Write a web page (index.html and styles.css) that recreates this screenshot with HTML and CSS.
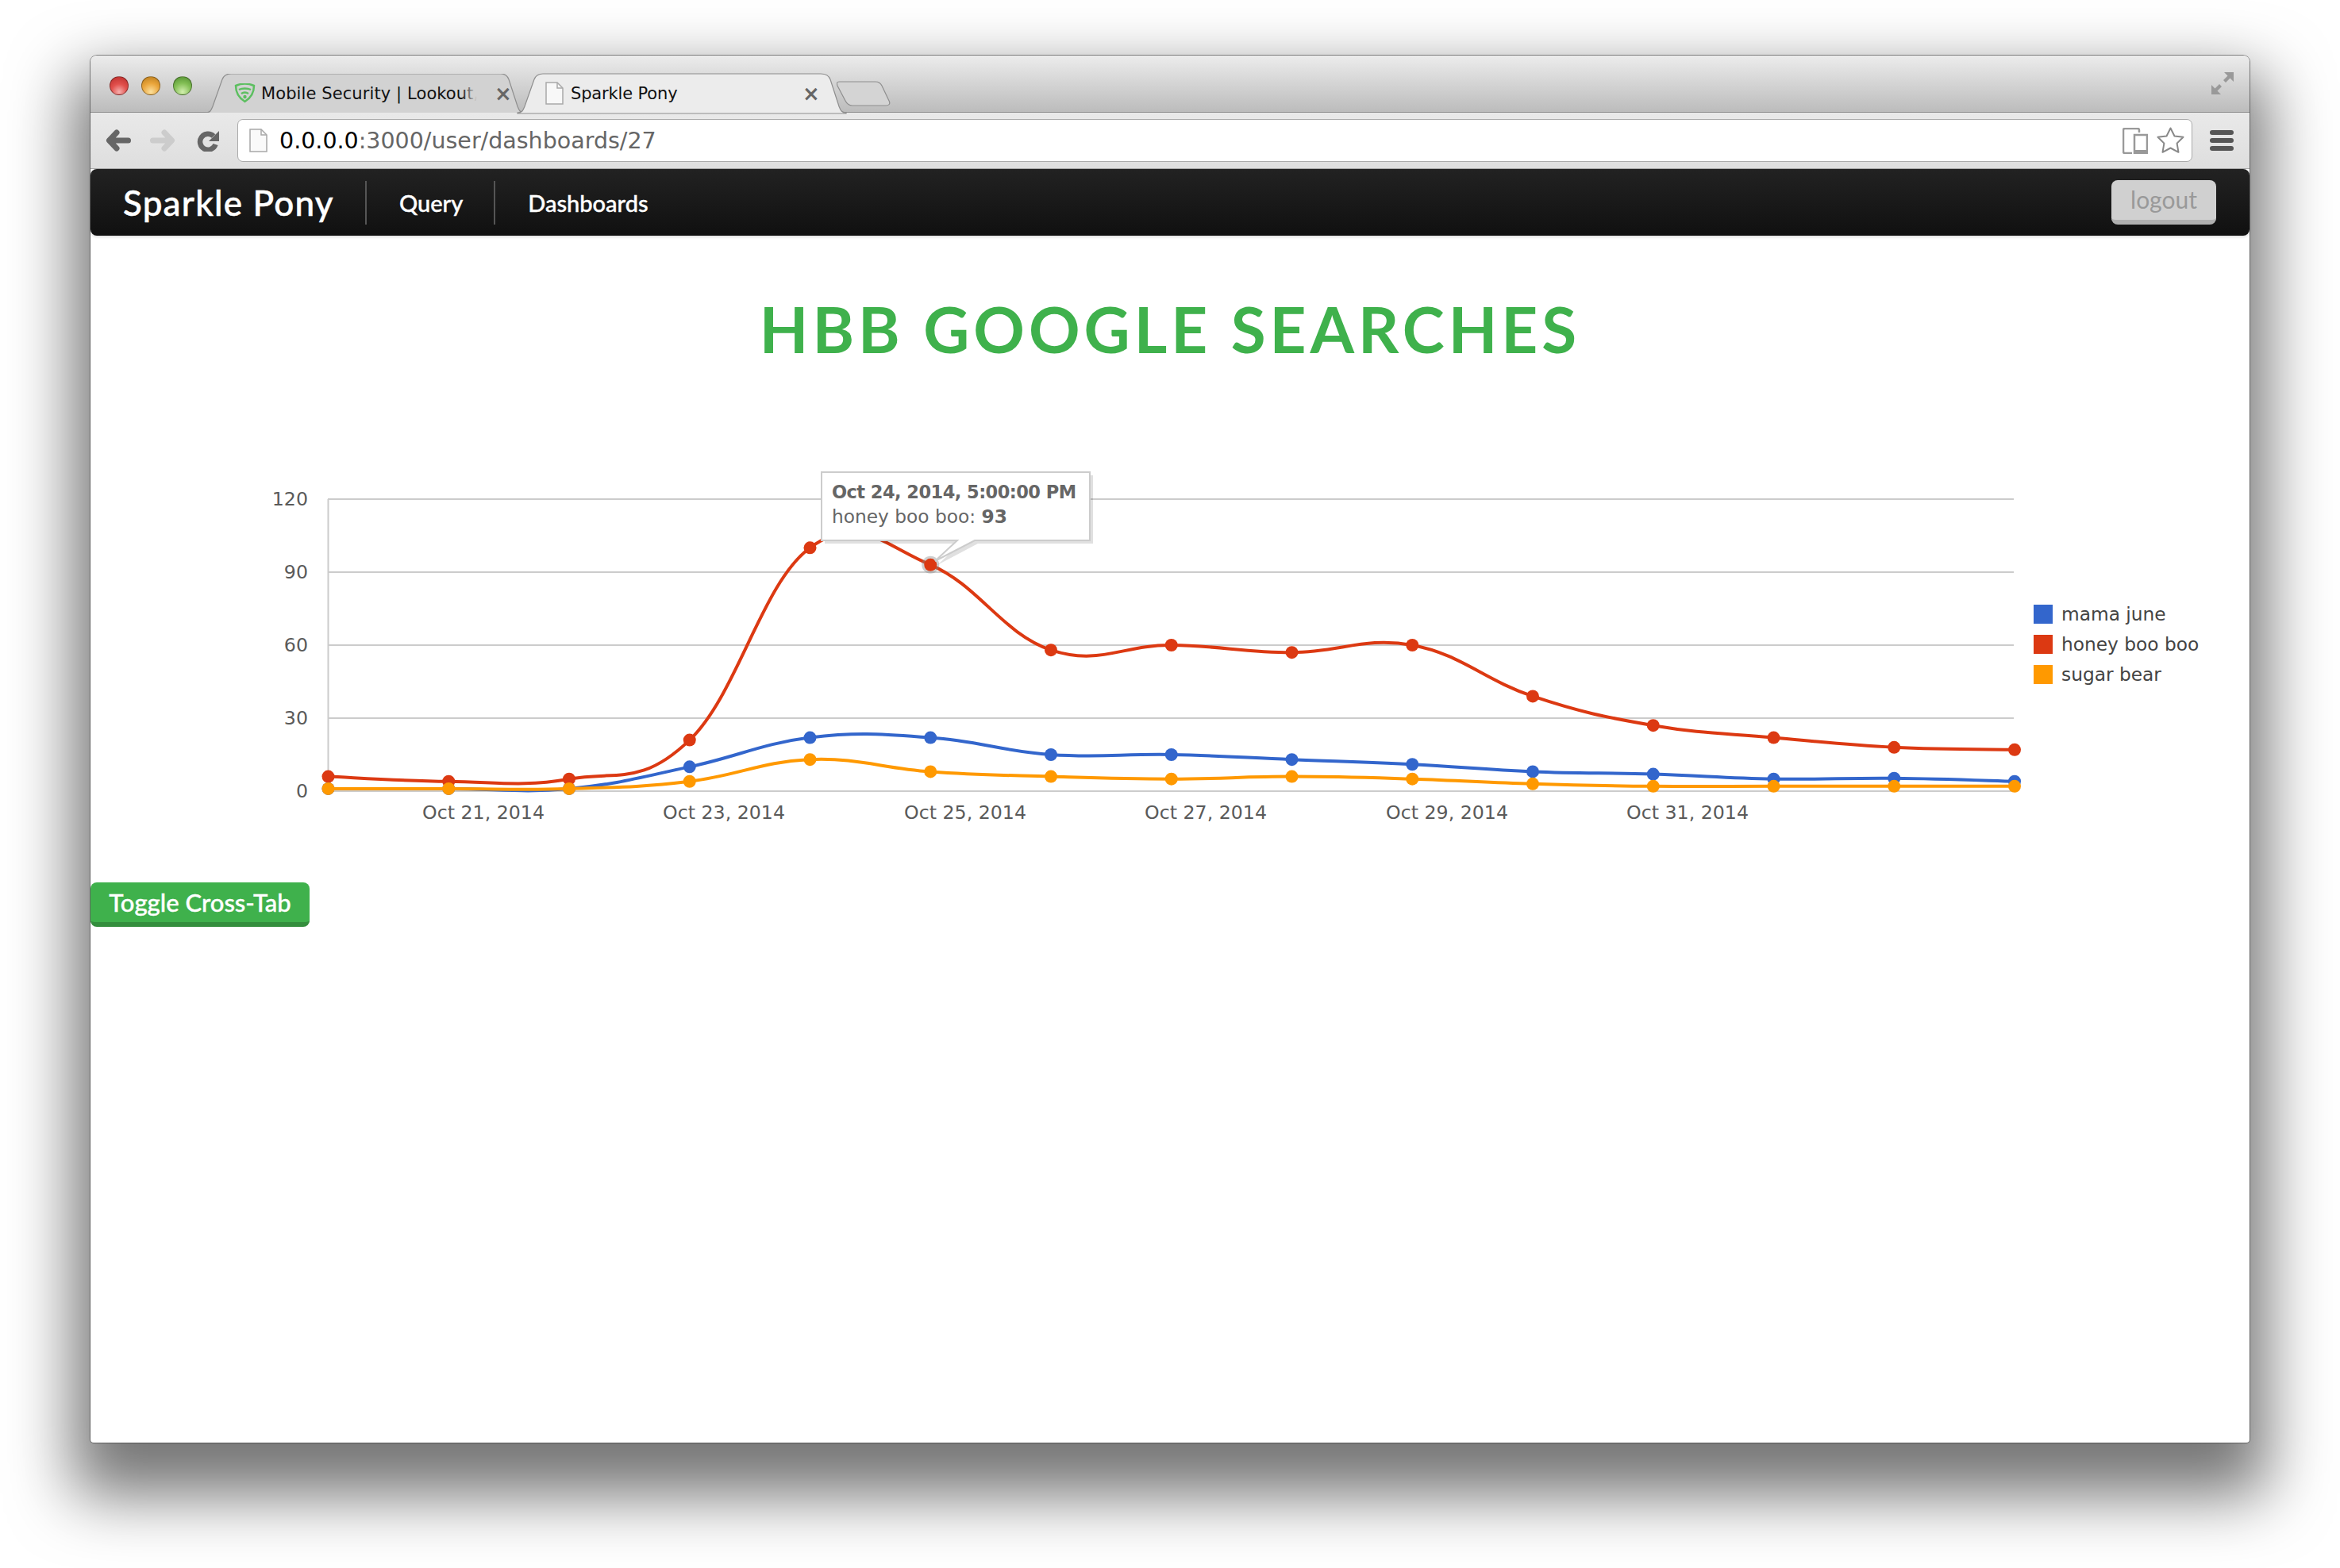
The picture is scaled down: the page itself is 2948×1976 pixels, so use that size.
FILE: index.html
```html
<!DOCTYPE html>
<html>
<head>
  <meta charset="UTF-8">
  <title>Sparkle Pony</title>
  <link rel="stylesheet" href="styles.css">
</head>
<body>
  <div class="window">
    <div class="titlebar">
      <div class="lights">
        <span class="light red"></span>
        <span class="light amber"></span>
        <span class="light green"></span>
      </div>
      <div class="tabs">
        <div class="tab tab-back">
          <svg class="tab-shape" width="402" height="49" viewBox="0 0 402 49"><path d="M0 49C6 49 7 46 9 41L21 7C23 2 26 0 32 0H372C377 0 380 2 382 7L393 41C395 46 396 49 402 49"/></svg>
          <svg class="favicon" width="27" height="25" viewBox="0 0 27 25"><path d="M2 3C9 0 18 0 25 3C25 12 20 19 13.5 23C7 19 2 12 2 3Z" fill="none" stroke="#5cbf60" stroke-width="2.5"/><path d="M6 8C10 6 17 6 21 8M9 13C12 11 15 11 18 13" fill="none" stroke="#5cbf60" stroke-width="2.5"/><circle cx="13.5" cy="17" r="2.2" fill="#5cbf60"/></svg>
          <span class="tab-title">Mobile Security | Lookout,</span>
          <span class="tab-close">×</span>
        </div>
        <div class="tab tab-front">
          <svg class="tab-shape" width="414" height="50" viewBox="0 0 414 50"><path d="M0 49C6 49 7 46 9 41L21 7C23 2 26 0 32 0H382C389 0 392 2 394 7L405 41C407 46 408 49 414 49V50H0Z"/></svg>
          <svg class="favicon" width="23" height="29" viewBox="0 0 23 29"><path d="M1 1H15L22 8V28H1Z" fill="#f8f8f8" stroke="#a8a8a8" stroke-width="1.5"/><path d="M15 1V8H22" fill="none" stroke="#a8a8a8" stroke-width="1.5"/></svg>
          <span class="tab-title">Sparkle Pony</span>
          <span class="tab-close">×</span>
        </div>
        <div class="tab-new">
          <svg width="68" height="32" viewBox="0 0 68 32"><path d="M3 1H49C53 1 55 2 57 6L66 25C68 29 66 31 62 31H20C16 31 13 29 11 25L1 6C0 3 0 1 3 1Z" fill="#d4d4d4" stroke="#8e8e8e" stroke-width="1.2"/></svg>
        </div>
      </div>
      <svg class="expand" width="28" height="28" viewBox="0 0 28 28"><path d="M28 0V12L23.500 7.500L18 13L15 10L20.500 4.500L16 0ZM0 28V16L4.500 20.500L10 15L13 18L7.500 23.500L12 28Z" fill="#999"/></svg>
    </div>

    <div class="toolbar">
      <svg class="nav-btn" width="32" height="28" viewBox="0 0 32 28"><path d="M28.500 14H5M14 4L4.500 14L14 24" fill="none" stroke="#666" stroke-width="7" stroke-linecap="round" stroke-linejoin="round"/></svg>
      <svg class="nav-btn" width="32" height="28" viewBox="0 0 32 28"><path d="M3.500 14H27M18 4L27.500 14L18 24" fill="none" stroke="#ccc" stroke-width="7" stroke-linecap="round" stroke-linejoin="round"/></svg>
      <svg class="nav-btn reload" width="28" height="28" viewBox="0 0 28 28"><path d="M21 8.500A10 10 0 1 0 23.500 19" fill="none" stroke="#666" stroke-width="6.500"/><path d="M28 2V15H15Z" fill="#666"/></svg>
      <div class="address">
        <svg class="favicon" width="23" height="30" viewBox="0 0 23 30"><path d="M1 1H15L22 8V29H1Z" fill="#fafafa" stroke="#a8a8a8" stroke-width="1.5"/><path d="M15 1V8H22" fill="none" stroke="#a8a8a8" stroke-width="1.5"/></svg>
        <span class="url"><b>0.0.0.0</b>:3000/user/dashboards/27</span>
        <svg width="32" height="33" viewBox="0 0 32 33"><path d="M21 6V3C21 1.500 20 1 19 1H3C1.500 1 1 2 1 3V30C1 31.500 2 32 3 32H12" fill="none" stroke="#999" stroke-width="2.500"/><rect x="15" y="9" width="16" height="23" fill="none" stroke="#999" stroke-width="2.500"/><rect x="15" y="28" width="16" height="4" fill="#999"/></svg>
        <svg class="star" width="35" height="34" viewBox="0 0 35 34"><path d="M17.500 1.500L22.500 11.500L33.500 12.700L25.600 20.600L27.500 31.800L17.500 26.500L7.500 31.800L9.400 20.600L1.500 12.700L12.500 11.500Z" fill="#fff" stroke="#888" stroke-width="2" stroke-linejoin="round"/></svg>
      </div>
      <div class="menu-btn"><span></span><span></span><span></span></div>
    </div>

    <nav class="navbar">
      <a class="brand">Sparkle Pony</a>
      <a class="nav-link">Query</a>
      <a class="nav-link">Dashboards</a>
      <button class="logout">logout</button>
    </nav>

    <main class="content">
      <h1 class="dash-title">HBB GOOGLE SEARCHES</h1>
      <svg id="chart" class="chart" width="2720" height="540" viewBox="0 0 2720 540">
        <g class="grid">
          <path d="M300.500 69V437"/>
          <path d="M300 69H2424M300 161H2424M300 253H2424M300 345H2424M300 437H2424"/>
        </g>
        <g class="axis-y">
          <text x="275" y="77">120</text>
          <text x="275" y="169">90</text>
          <text x="275" y="261">60</text>
          <text x="275" y="353">30</text>
          <text x="275" y="445">0</text>
        </g>
        <g class="axis-x">
          <text x="496" y="472">Oct 21, 2014</text>
          <text x="799" y="472">Oct 23, 2014</text>
          <text x="1103" y="472">Oct 25, 2014</text>
          <text x="1406" y="472">Oct 27, 2014</text>
          <text x="1710" y="472">Oct 29, 2014</text>
          <text x="2013" y="472">Oct 31, 2014</text>
        </g>
        <g id="series"></g>
        <g class="legend">
          <rect x="2449" y="202" width="24" height="24" fill="#3366cc"/>
          <text x="2484" y="222">mama june</text>
          <rect x="2449" y="240" width="24" height="24" fill="#dc3912"/>
          <text x="2484" y="260">honey boo boo</text>
          <rect x="2449" y="278" width="24" height="24" fill="#ff9900"/>
          <text x="2484" y="298">sugar bear</text>
        </g>
        <g class="tip">
          <path class="tip-shadow" d="M926 39H1264V125H1119L1068 152L1097 125H926Z"/>
          <path class="tip-box" d="M922 35H1260V121H1115L1065 147L1093 121H922Z"/>
          <text class="tip-head" x="935" y="68">Oct 24, 2014, 5:00:00 PM</text>
          <text x="935" y="99">honey boo boo: <tspan class="tip-value">93</tspan></text>
        </g>
      </svg>
      <button class="toggle">Toggle Cross-Tab</button>
    </main>
  </div>
  <script src="chart.js"></script>
</body>
</html>
```

FILE: styles.css
```css
html, body { margin: 0; padding: 0; background: #fff; }
body { height: 1976px; overflow: hidden; padding: 70px 0 0 114px; box-sizing: border-box; }

.window { width: 2720px; height: 1748px; display: flex; flex-direction: column; background: #fff; border-radius: 8px 8px 4px 4px; box-shadow: 0 0 0 1px rgba(60, 60, 60, 0.6), 0 45px 80px 22px rgba(0, 0, 0, 0.54); }

.titlebar { height: 72px; box-sizing: border-box; display: flex; align-items: flex-start; padding-left: 24px; background: linear-gradient(#ececec, #bcbcbc); border-radius: 8px 8px 0 0; border-bottom: 1px solid #8c8c8c; }
.lights { display: flex; gap: 16px; margin-top: 26px; }
.light { width: 24px; height: 24px; border-radius: 50%; box-sizing: border-box; border: 1px solid rgba(0, 0, 0, 0.35); }
.red { background: radial-gradient(circle at 50% 85%, #f5b0ae 0, #e2514d 45%, #b92c2a 100%); }
.amber { background: radial-gradient(circle at 50% 85%, #fbdf9c 0, #eaa53b 50%, #b67a1c 100%); }
.green { background: radial-gradient(circle at 50% 85%, #d2eeae 0, #83bf55 50%, #4f8c2e 100%); }

.tabs { display: flex; align-items: flex-start; margin: 23px 0 0 17px; flex: 1; height: 49px; }
.tab { position: relative; height: 49px; display: flex; align-items: center; box-sizing: border-box; font-family: "DejaVu Sans", sans-serif; font-size: 21px; color: #111; }
.tab-shape { position: absolute; left: 0; top: 0; }
.tab-shape path { stroke: #8e8e8e; stroke-width: 1.2; }
.tab-back { width: 402px; padding: 0 22px 0 36px; }
.tab-back .tab-shape path { fill: #d2d2d2; }
.tab-front { width: 414px; margin-left: -9px; padding: 0 39px 0 35px; z-index: 2; }
.tab-front .tab-shape { overflow: visible; }
.tab-front .tab-shape path { fill: #ececec; }
.favicon { position: relative; flex: none; }
.tab-title { position: relative; flex: 1; white-space: nowrap; margin-left: 9px; letter-spacing: -0.15px; }
.tab-back .tab-title { flex: none; margin-left: 7px; letter-spacing: 0.1px; }
.tab-back .tab-title::after { content: ""; position: absolute; right: 0; top: 0; bottom: 0; width: 22px; background: linear-gradient(to right, rgba(210, 210, 210, 0), #d2d2d2 90%); }
.tab-close { position: relative; flex: none; width: 16px; margin-left: auto; text-align: center; font-size: 26px; font-weight: bold; color: #666; line-height: 1; }
.tab-new { margin: 9px 0 0 -12px; }
.tab-new svg { display: block; }
.expand { margin: 21px 20px 0 0; }

.toolbar { height: 71px; flex: none; display: flex; align-items: center; padding: 0 20px 0 19px; background: linear-gradient(#e9e9e9, #dedede); border-bottom: 1px solid #a8a8a8; box-sizing: border-box; }
.nav-btn { flex: none; margin-right: 24px; }
.reload { margin: 0 23px 0 3px; }
.address { flex: 1; height: 54px; box-sizing: border-box; display: flex; align-items: center; padding: 0 9px 0 14px; background: #fff; border: 1px solid #aaa; border-radius: 7px; }
.url { flex: 1; margin-left: 15px; font-family: "DejaVu Sans", sans-serif; font-size: 28.5px; color: #666; white-space: nowrap; }
.url b { color: #000; font-weight: normal; }
.star { margin-left: 11px; }
.menu-btn { flex: none; width: 30px; margin-left: 22px; display: flex; flex-direction: column; gap: 4px; }
.menu-btn span { height: 6px; border-radius: 3px; background: #555; }

.navbar { height: 84px; flex: none; display: flex; align-items: center; padding: 0 42px 0 41px; box-sizing: border-box; background: linear-gradient(#222, #101010); border-radius: 8px; box-shadow: 0 2px 3px rgba(0, 0, 0, 0.12); font-family: Lato, sans-serif; color: #fff; }
.brand { font-size: 44px; font-weight: 500; letter-spacing: 1.2px; padding-right: 43px; border-right: 2px solid #555; line-height: 55px; width: 262px; white-space: nowrap; -webkit-text-stroke: 0.5px #fff; }
.nav-link { font-size: 29px; font-weight: 500; line-height: 55px; padding: 0 39px 0 41px; border-right: 2px solid #555; -webkit-text-stroke: 0.4px #fff; }
.nav-link:last-of-type { border-right: none; }
.logout { margin-left: auto; width: 132px; height: 56px; background: #d0d0d0; border: none; border-bottom: 6px solid #b0b0b0; border-radius: 8px; font-family: Lato, sans-serif; font-size: 30px; color: #999; padding: 0 0 2px; }

.content { flex: 1; }
.dash-title { margin: 68px 0 97px; height: 98px; line-height: 98px; text-align: center; font-family: Lato, sans-serif; font-size: 80px; font-weight: bold; letter-spacing: 5px; color: #3fb14c; }
.chart { display: block; margin-left: -1px; font-family: "DejaVu Sans", sans-serif; font-size: 23.7px; }
.grid path { fill: none; stroke: #ccc; stroke-width: 2; }
.axis-y text { fill: #5a5a5a; text-anchor: end; }
.axis-x text { fill: #5a5a5a; text-anchor: middle; }
.legend text { fill: #444; font-size: 23.3px; }
.line { fill: none; stroke-width: 4; }
.halo { fill: #888; opacity: 0.4; }
.tip-shadow { fill: #000; opacity: 0.12; }
.tip-box { fill: #fff; stroke: #ccc; stroke-width: 2; }
.tip text { fill: #666; font-size: 23.3px; }
.tip .tip-head { font-weight: bold; font-size: 22.5px; letter-spacing: -0.55px; }
.tip-value { font-weight: bold; }
.toggle { display: block; margin-top: 12px; width: 276px; height: 56px; background: #3fb14c; border: none; border-bottom: 6px solid #348e3d; border-radius: 8px; font-family: Lato, sans-serif; font-size: 31px; font-weight: 500; color: #fff; padding: 0; -webkit-text-stroke: 0.4px #fff; }
```

FILE: chart.js
```js
const svgNS = 'http://www.w3.org/2000/svg';
const left = 300.5, step = 151.75, base = 437, unit = 92 / 30;

const series = [
  { color: '#3366cc', values: [1, 1, 1, 10, 22, 22, 15, 15, 13, 11, 8, 7, 5, 5.3, 4] },
  { color: '#dc3912', values: [6, 4, 5, 21, 100, 93, 58, 60, 57, 60, 39, 27, 22, 18, 17] },
  { color: '#ff9900', values: [1, 1, 1, 4, 13, 8, 6, 5, 6, 5, 3, 2, 2, 2, 2] }
];

function make(name, attrs) {
  const el = document.createElementNS(svgNS, name);
  Object.keys(attrs).forEach(k => el.setAttribute(k, attrs[k]));
  return el;
}

// Curva suave entre puntos, como curveType: function
function curve(pts) {
  let d = `M${pts[0][0]} ${pts[0][1]}`;
  for (let i = 0; i < pts.length - 1; i++) {
    const a = pts[Math.max(i - 1, 0)], b = pts[i], c = pts[i + 1], e = pts[Math.min(i + 2, pts.length - 1)];
    const x1 = b[0] + (c[0] - a[0]) / 5, y1 = b[1] + (c[1] - a[1]) / 5;
    const x2 = c[0] - (e[0] - b[0]) / 5, y2 = c[1] - (e[1] - b[1]) / 5;
    d += `C${x1} ${y1} ${x2} ${y2} ${c[0]} ${c[1]}`;
  }
  return d;
}

const group = document.getElementById('series');

series.forEach(s => {
  const pts = s.values.map((v, i) => [left + i * step, base - v * unit]);
  group.appendChild(make('path', { class: 'line', d: curve(pts), stroke: s.color }));
  if (s.color === '#dc3912') {
    group.appendChild(make('circle', { class: 'halo', cx: pts[5][0], cy: pts[5][1], r: 11 }));
  }
  pts.forEach(p => {
    group.appendChild(make('circle', { cx: p[0], cy: p[1], r: 8, fill: s.color }));
  });
});
```
